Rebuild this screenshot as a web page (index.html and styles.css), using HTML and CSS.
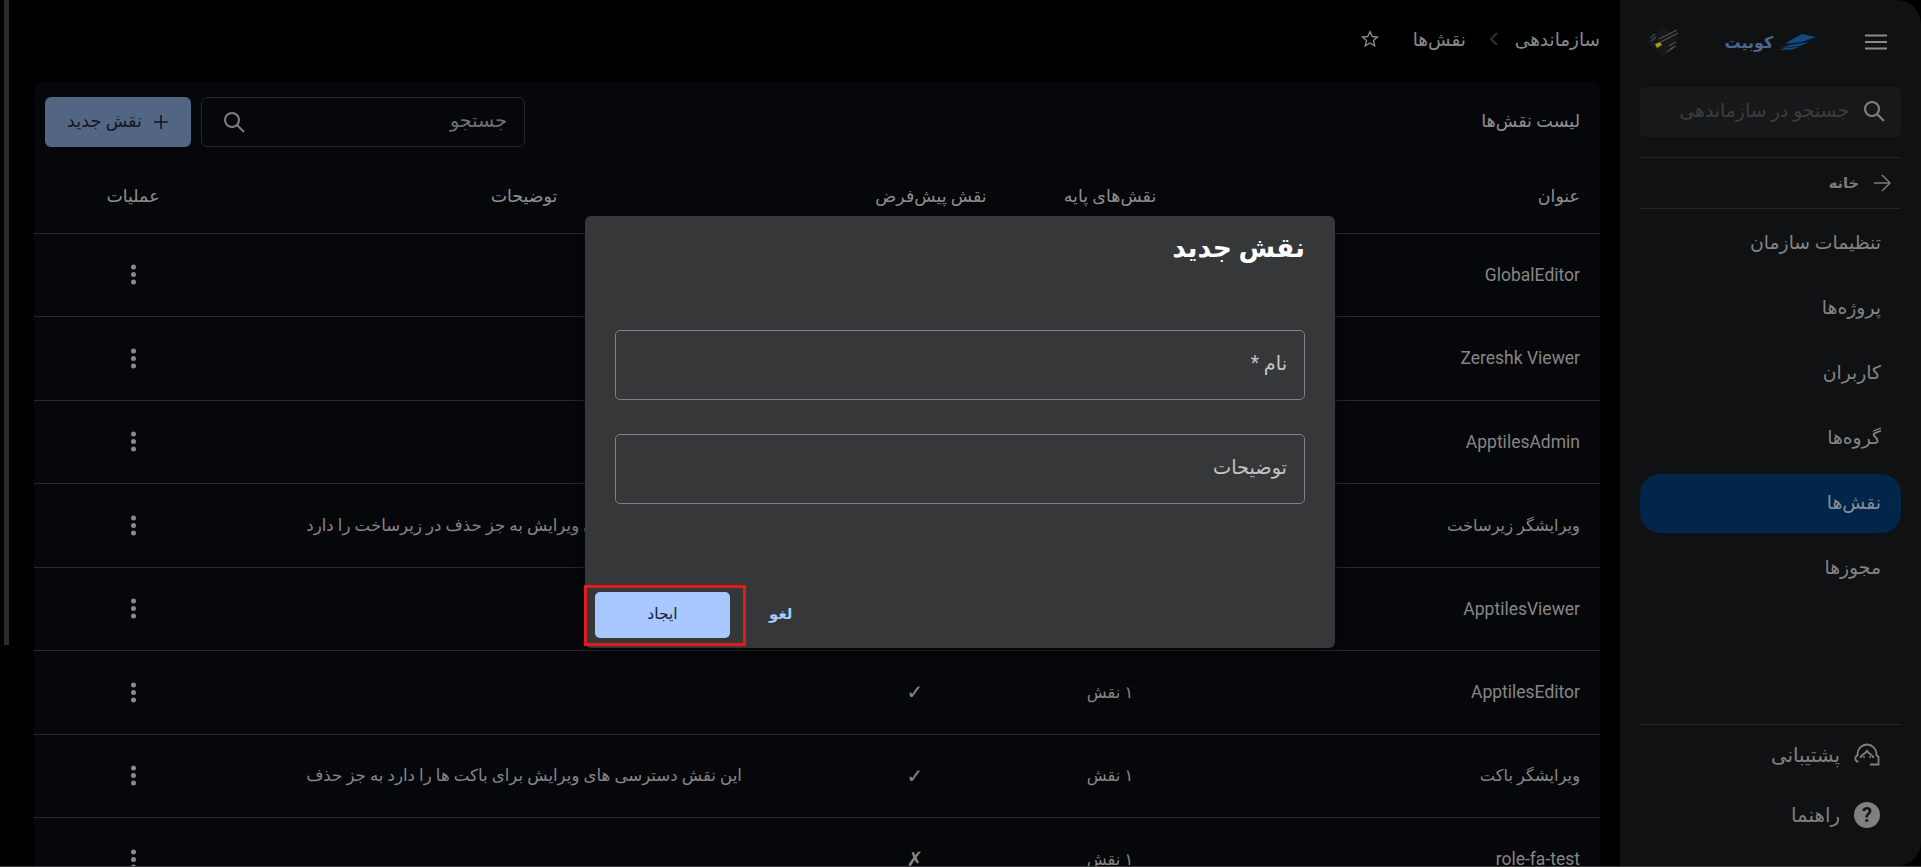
FILE: index.html
```html
<!DOCTYPE html>
<html lang="fa" dir="rtl">
<head>
<meta charset="UTF-8">
<meta name="viewport" content="width=device-width, initial-scale=1.0">
<title>نقش‌ها</title>
<link rel="stylesheet" href="styles.css">
</head>
<body>

<!-- Sidebar -->
<aside class="sidebar">
    <div class="brand">
        <svg class="menu-icon" viewBox="0 0 22 16" width="22" height="16"><path d="M0 1.5h22M0 8h22M0 14.5h22" stroke="#8c8c8c" stroke-width="2.2"/></svg>
        <div class="logo">
            <svg viewBox="0 0 36 16" width="36" height="16"><path d="M36 3 22 0 11 6 5 10 22 8Z" fill="#124a80"/><path d="M29 8 10 11 1 14 20 12Z" fill="#124a80"/><path d="M20 13 5 14 0 16 12 15.500Z" fill="#124a80"/></svg>
            <span>کوبیت</span>
        </div>
        <svg class="avatar" viewBox="0 0 34 34" width="34" height="34">
            <path d="M17 1 33 13 18 33 1 17Z" fill="#17181a"/>
            <path d="M4 13 9 9M5 16 10 12M13 14 31 5M15 17 32 8M23 21 30 17M24 24 30 21M21 27 27 23" stroke="#5f5f5f" stroke-width="1"/>
            <path d="M9 19 14 17 16 20 11 23Z" fill="#a89a1c"/>
        </svg>
    </div>

    <div class="side-search">
        <svg viewBox="0 0 24 24" width="24" height="24"><circle cx="10" cy="10" r="7" fill="none" stroke="#7e7e7e" stroke-width="2.200"/><path d="M15 15 22 22" stroke="#7e7e7e" stroke-width="2.200"/></svg>
        <span>جستجو در سازماندهی</span>
    </div>

    <a class="home-link">
        <svg viewBox="0 0 18 18" width="18" height="18"><path d="M1 9h16M9 1l8 8-8 8" fill="none" stroke="#7b7b7b" stroke-width="1.500"/></svg>
        <span>خانه</span>
    </a>

    <nav class="side-nav">
        <a>تنظیمات سازمان</a>
        <a>پروژه‌ها</a>
        <a>کاربران</a>
        <a>گروه‌ها</a>
        <a class="active">نقش‌ها</a>
        <a>مجوزها</a>
    </nav>

    <div class="side-footer">
        <a>
            <svg viewBox="0 0 26 24" width="26" height="24"><path d="M3.500 13V11a9.500 9.500 0 0 1 19 0v2M3 12.500 1.500 14v3L3 18.500h1.500M23 12.500 24.500 14v7.500H16M6.500 15c0-3 3.500-3 6.500-7 2 3.500 6.500 4 6.500 7" fill="none" stroke="#808080" stroke-width="1.800"/><circle cx="10" cy="14" r="1" fill="#808080"/><circle cx="16" cy="14" r="1" fill="#808080"/></svg>
            <span>پشتیبانی</span>
        </a>
        <a>
            <span class="help-icon">?</span>
            <span>راهنما</span>
        </a>
    </div>
</aside>

<!-- Main content -->
<main class="main">
    <div class="topbar">
        <span>سازماندهی</span>
        <svg class="crumb-sep" viewBox="0 0 10 14" width="10" height="14"><path d="M8 1 2 7l6 6" fill="none" stroke="#2f3032" stroke-width="2"/></svg>
        <span>نقش‌ها</span>
        <svg class="star" viewBox="0 0 24 24" width="20" height="20"><path d="M12 3l2.700 6 6.300.6-4.800 4.200 1.500 6.400L12 16.800 6.300 20.200l1.500-6.400L3 9.600 9.300 9Z" fill="none" stroke="#8a8a8a" stroke-width="1.600"/></svg>
    </div>

    <section class="card">
        <div class="card-head">
            <h2>لیست نقش‌ها</h2>
            <div class="card-tools">
                <div class="search-box">
                    <span>جستجو</span>
                    <svg viewBox="0 0 24 24" width="24" height="24"><circle cx="10" cy="10" r="7" fill="none" stroke="#7e7e7e" stroke-width="2"/><path d="M15 15 22 22" stroke="#7e7e7e" stroke-width="2"/></svg>
                </div>
                <button class="new-btn">
                    <svg viewBox="0 0 16 16" width="16" height="16"><path d="M8 1v14M1 8h14" stroke="#14171c" stroke-width="1.600"/></svg>
                    <span>نقش جدید</span>
                </button>
            </div>
        </div>

        <div class="row head-row">
            <div class="c-title">عنوان</div>
            <div class="c-base">نقش‌های پایه</div>
            <div class="c-default">نقش پیش‌فرض</div>
            <div class="c-desc">توضیحات</div>
            <div class="c-ops">عملیات</div>
        </div>

        <div class="row">
            <div class="c-title en">GlobalEditor</div><div class="c-base"></div><div class="c-default"></div><div class="c-desc"></div>
            <div class="c-ops"><i class="dots"></i></div>
        </div>
        <div class="row">
            <div class="c-title en">Zereshk Viewer</div><div class="c-base"></div><div class="c-default"></div><div class="c-desc"></div>
            <div class="c-ops"><i class="dots"></i></div>
        </div>
        <div class="row">
            <div class="c-title en">ApptilesAdmin</div><div class="c-base"></div><div class="c-default"></div><div class="c-desc"></div>
            <div class="c-ops"><i class="dots"></i></div>
        </div>
        <div class="row">
            <div class="c-title">ویرایشگر زیرساخت</div><div class="c-base"></div><div class="c-default"></div>
            <div class="c-desc">این نقش دسترسی های ویرایش به جز حذف در زیرساخت را دارد</div>
            <div class="c-ops"><i class="dots"></i></div>
        </div>
        <div class="row">
            <div class="c-title en">ApptilesViewer</div><div class="c-base"></div><div class="c-default"></div><div class="c-desc"></div>
            <div class="c-ops"><i class="dots"></i></div>
        </div>
        <div class="row">
            <div class="c-title en">ApptilesEditor</div><div class="c-base">۱ نقش</div><div class="c-default mark">✓</div><div class="c-desc"></div>
            <div class="c-ops"><i class="dots"></i></div>
        </div>
        <div class="row">
            <div class="c-title">ویرایشگر باکت</div><div class="c-base">۱ نقش</div><div class="c-default mark">✓</div>
            <div class="c-desc">این نقش دسترسی های ویرایش برای باکت ها را دارد به جز حذف</div>
            <div class="c-ops"><i class="dots"></i></div>
        </div>
        <div class="row">
            <div class="c-title en">role-fa-test</div><div class="c-base">۱ نقش</div><div class="c-default mark">✗</div><div class="c-desc"></div>
            <div class="c-ops"><i class="dots"></i></div>
        </div>
    </section>
</main>

<div class="page-scroll"></div>

<!-- New role dialog -->
<div class="modal">
    <h1>نقش جدید</h1>
    <div class="field">نام *</div>
    <div class="field">توضیحات</div>
    <div class="modal-actions">
        <button class="btn-text">لغو</button>
        <div class="highlight">
            <button class="btn-primary">ایجاد</button>
        </div>
    </div>
</div>

</body>
</html>
```

FILE: styles.css
```css
* {
    box-sizing: border-box;
}
body {
    font-family: Roboto, "DejaVu Sans", sans-serif;
    margin: 0;
    height: 867px;
    overflow: hidden;
    display: flex;
    position: relative;
    background-color: #000;
    border-bottom: 1px solid #3d3d3d;
    color: #8a8a8a;
    font-size: 15px;
}
svg {
    display: block;
    flex-shrink: 0;
}

/* Sidebar */
.sidebar {
    width: 301px;
    flex-shrink: 0;
    margin-left: 20px;
    padding: 0 20px;
    background-color: #101113;
    border-radius: 0 24px 24px 0;
    display: flex;
    flex-direction: column;
}
.brand {
    height: 84px;
    margin-bottom: 3px;
    padding: 0 14px 0 6px;
    display: flex;
    align-items: center;
    justify-content: space-between;
}
.logo {
    margin-right: 4px;
    display: flex;
    align-items: center;
    gap: 7px;
    color: #4b668f;
    font-weight: bold;
    font-size: 16px;
}
.side-search {
    height: 50px;
    padding: 0 15px 2px;
    display: flex;
    align-items: center;
    gap: 13px;
    background-color: #17181a;
    border-radius: 6px;
    color: #3c3d3e;
    font-size: 18.800px;
}
.home-link {
    margin-top: 20px;
    height: 52px;
    padding: 0 10px;
    display: flex;
    align-items: center;
    gap: 14px;
    border-top: 1px solid #232426;
    border-bottom: 1px solid #232426;
    color: #7b7b7b;
    font-size: 14.600px;
    font-weight: bold;
}
.side-nav {
    margin-top: 5px;
    display: flex;
    flex-direction: column;
    gap: 6px;
}
.side-nav a {
    height: 59px;
    padding: 0 20px 2px;
    display: flex;
    align-items: center;
    border-radius: 20px;
    color: #838383;
    font-size: 18.800px;
}
.side-nav a.active {
    background-color: #02254a;
    color: #858d98;
}
.side-footer {
    margin-top: auto;
    margin-bottom: 21px;
    border-top: 1px solid #232426;
}
.side-footer a {
    height: 60px;
    padding: 0 21px;
    display: flex;
    align-items: center;
    gap: 14px;
    color: #808080;
    font-size: 19.800px;
}
.help-icon {
    width: 26px;
    height: 26px;
    border-radius: 50%;
    background-color: #808080;
    color: #101113;
    font-size: 20px;
    font-weight: bold;
    line-height: 26px;
    text-align: center;
}

/* Main */
.main {
    flex: 1;
    min-width: 0;
}
.topbar {
    height: 82px;
    display: flex;
    align-items: center;
    gap: 16px;
    color: #8a8a8a;
    font-size: 18.400px;
    padding-bottom: 4px;
}
.crumb-sep {
    margin-left: 7px;
}
.star {
    margin-right: 17px;
}
.card {
    background-color: #06070a;
    border-radius: 6px 6px 0 0;
}
.card-head {
    height: 83px;
    padding: 15px 20px 0 11px;
    display: flex;
    align-items: flex-start;
    justify-content: space-between;
}
.card-head h2 {
    margin: 0;
    line-height: 48px;
    font-size: 17.600px;
    font-weight: normal;
    color: #8f8f8f;
}
.card-tools {
    display: flex;
    gap: 10px;
}
.search-box {
    width: 324px;
    height: 50px;
    padding: 0 17px 0 20px;
    display: flex;
    align-items: center;
    justify-content: space-between;
    border: 1px solid #25262a;
    border-radius: 6px;
    color: #6f6f6f;
    font-size: 19.200px;
}
.search-box span {
    padding-bottom: 3px;
}
.new-btn {
    width: 146px;
    height: 50px;
    display: flex;
    align-items: center;
    justify-content: center;
    gap: 11px;
    border: none;
    border-radius: 6px;
    background-color: #526583;
    color: #14171c;
    font-family: inherit;
    font-size: 17.600px;
}
.new-btn span {
    padding-bottom: 3px;
}

/* Table */
.row {
    height: 83.5px;
    padding-left: 56px;
    display: grid;
    grid-template-columns: 370px 240px 118px 696px 86px;
    align-items: center;
    border-bottom: 1px solid #2a2b2d;
    color: #868686;
    font-size: 16.300px;
}
.head-row {
    height: 68.500px;
    padding-bottom: 6px;
    color: #8f8f8f;
    font-size: 17.400px;
}
.c-title {
    padding-right: 20px;
}
.c-title.en {
    font-size: 17.500px;
}
.c-base,
.c-default,
.c-desc,
.c-ops {
    text-align: center;
}
.c-desc {
    white-space: nowrap;
}
.row:not(.head-row) .c-desc {
    font-size: 16.600px;
}
.mark {
    padding-right: 32px;
    font-size: 20px;
}
.dots {
    display: block;
    width: 5px;
    height: 5px;
    margin: 0 auto;
    border-radius: 50%;
    background-color: #8a8a8a;
    box-shadow: 0 -7.500px 0 #8a8a8a, 0 7.500px 0 #8a8a8a;
}

/* Left page scrollbar */
.page-scroll {
    width: 5px;
    height: 645px;
    margin-left: 4px;
    margin-right: 25px;
    background-color: #2b2b2b;
}

/* Dialog */
.modal {
    position: absolute;
    top: 216px;
    left: 585px;
    width: 750px;
    height: 432px;
    padding: 0 30px;
    display: flex;
    flex-direction: column;
    background-color: #363738;
    border-radius: 6px;
    box-shadow: 0 8px 24px rgba(0, 0, 0, 0.4);
}
.modal h1 {
    margin: 12px 0 0;
    height: 102px;
    color: #fff;
    font-size: 26.500px;
    line-height: 40px;
    font-weight: bold;
}
.field {
    height: 70px;
    margin-bottom: 34px;
    padding: 0 17px 4px;
    display: flex;
    align-items: center;
    border: 1px solid #808184;
    border-radius: 5px;
    color: #c4c4c4;
    font-size: 19.300px;
}
.modal-actions {
    margin-top: auto;
    margin-bottom: 2px;
    margin-left: -31px;
    display: flex;
    justify-content: flex-end;
    align-items: center;
    gap: 0;
}
.btn-text {
    margin-left: 23px;
    padding: 0 0 3px;
    border: none;
    background: none;
    color: #a8c8ff;
    font-family: inherit;
    font-size: 15px;
    font-weight: bold;
}
.highlight {
    padding: 4px 13px 5px 8px;
    border: 3px solid #e01b1b;
}
.btn-primary {
    display: block;
    width: 135px;
    height: 46px;
    padding: 0 0 2px;
    border: none;
    border-radius: 5px;
    background-color: #a8c8ff;
    color: #1a2230;
    font-family: inherit;
    font-size: 15.500px;
}
```
